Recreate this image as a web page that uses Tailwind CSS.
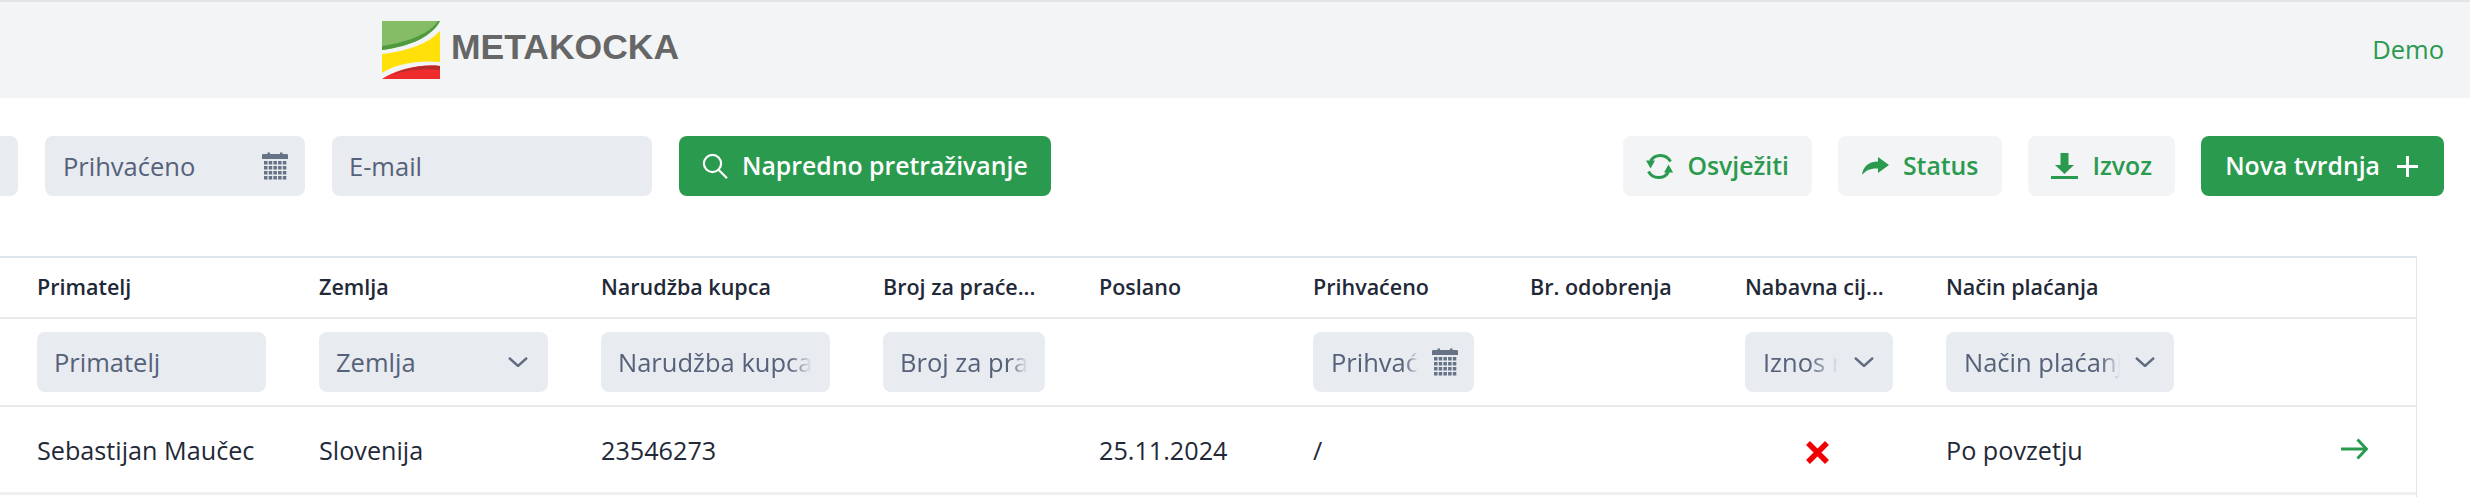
<!DOCTYPE html>
<html lang="en">
<head>
    <meta charset="UTF-8">
    <meta name="viewport" content="width=device-width, initial-scale=1.0">
    <title>Metakocka</title>
    <script src="https://cdn.jsdelivr.net/npm/@tailwindcss/browser@4"></script>
</head>
<body class="bg-white font-['Open_Sans',sans-serif] text-[#1f2937] overflow-hidden">
    <!-- Top bar -->
    <header class="h-[98px] bg-[#f3f4f6] border-t-2 border-[#e2e4e8] flex items-center justify-between pr-[26px] pl-[382px]">
        <div class="flex items-end gap-[11px] pb-[1px]">
            <svg class="w-[58px] h-[58px]" viewBox="0 0 58 58">
                <path d="M0 0H58C50 15 30 25 0 29Z" fill="#85bc66"/>
                <path d="M58 0C50 15 30 25 0 29V25C28 21 48 12 56 0Z" fill="#4f9a3f"/>
                <path d="M58 10V41C35 39 14 43 0 52V33C26 30 46 23 58 10Z" fill="#ffe008"/>
                <path d="M58 45V58H0C14 49 35 43 58 45Z" fill="#ee2c2c"/>
                <path d="M58 45V49C40 47 24 49 10 54C22 48 38 43 58 45Z" fill="#b92a2a"/>
            </svg>
            <span class="font-['Liberation_Sans',sans-serif] font-bold text-[35.5px] leading-none text-[#666666] pb-[13px]">METAKOCKA</span>
        </div>
        <a class="text-[#2a9a4e] text-[25.500px] font-medium -mt-[2px]">Demo</a>
    </header>

    <!-- Toolbar -->
    <div class="flex justify-between pt-[38px] pr-[26px] h-[158px]">
        <div class="flex gap-[27px] h-[60px]">
            <div class="w-[18px] bg-[#e8ebf0] rounded-r-lg"></div>
            <div class="w-[260px] bg-[#e8ebf0] rounded-lg flex items-center justify-between pl-[18px] pr-[17px] text-[25.500px] text-[#56617a]">
                <span>Prihvaćeno</span>
                <svg class="w-[26px] h-[28px]"><use href="#cal"/></svg>
            </div>
            <div class="w-[320px] bg-[#e8ebf0] rounded-lg flex items-center pl-[17px] text-[25.500px] text-[#56617a]">E-mail</div>
            <button class="bg-[#2a9a4e] text-white rounded-lg flex items-center gap-[14px] px-[23px] text-[24.800px] font-semibold">
                <svg class="w-[26px] h-[26px]" viewBox="0 0 26 26" fill="none" stroke="white" stroke-width="2.2"><circle cx="10.5" cy="10.5" r="8.6"/><path d="M16.8 17 25 25.2"/></svg>
                Napredno pretraživanje
            </button>
        </div>
        <div class="flex gap-[26px] h-[60px]">
            <button class="bg-[#f3f4f6] text-[#2a9a4e] rounded-lg flex items-center gap-[14px] px-[23px] text-[24.800px] font-semibold">
                <svg class="w-[27px] h-[27px]" viewBox="0 0 27 27" fill="none" stroke="#2a9a4e" stroke-width="3">
                    <path d="M24.500 8.500A11.500 11.500 0 0 0 4.500 8"/>
                    <path d="M2.500 18.500A11.500 11.500 0 0 0 22.500 19"/>
                    <path d="M0 7.500H9L4.500 15.500Z" fill="#2a9a4e" stroke="none"/>
                    <path d="M18 19.500H27L22.500 11.500Z" fill="#2a9a4e" stroke="none"/>
                </svg>
                Osvježiti
            </button>
            <button class="bg-[#f3f4f6] text-[#2a9a4e] rounded-lg flex items-center gap-[14px] px-[24px] text-[24.800px] font-semibold">
                <svg class="w-[27px] h-[18px]" viewBox="0 0 27 18"><path d="M16 0 27 8 16 16V11.500C9 11 4 13 0 18C1 10 6 4.500 16 4.500Z" fill="#2a9a4e"/></svg>
                Status
            </button>
            <button class="bg-[#f3f4f6] text-[#2a9a4e] rounded-lg flex items-center gap-[14px] px-[23px] text-[24.800px] font-semibold">
                <svg class="w-[27px] h-[26px]" viewBox="0 0 27 26" fill="#2a9a4e"><path d="M9.500 0H17.500V12H23L13.500 21 4 12H9.500Z"/><rect y="23" width="27" height="3"/></svg>
                Izvoz
            </button>
            <button class="bg-[#2a9a4e] text-white rounded-lg flex items-center gap-[17px] pl-[24px] pr-[26px] text-[24.800px] font-semibold">
                Nova tvrdnja
                <svg class="w-[21px] h-[21px]" viewBox="0 0 21 21" fill="white"><rect x="9" width="3" height="21"/><rect y="9" width="21" height="3"/></svg>
            </button>
        </div>
    </div>

    <!-- Hidden icon definitions -->
    <svg class="hidden">
        <symbol id="cal" viewBox="0 0 26 28">
            <path d="M0 3.500C0 2.500 .5 2 1.500 2H5.500V.5H8V2H18V.5H20.500V2H24.500C25.500 2 26 2.500 26 3.500V7H0Z" fill="#667285"/>
            <g fill="#667285">
                <rect x="2" y="9" width="3.500" height="3.500"/><rect x="6.700" y="9" width="3.500" height="3.500"/><rect x="11.400" y="9" width="3.500" height="3.500"/><rect x="16.100" y="9" width="3.500" height="3.500"/><rect x="20.800" y="9" width="3.500" height="3.500"/>
                <rect x="2" y="14" width="3.500" height="3.500"/><rect x="6.700" y="14" width="3.500" height="3.500"/><rect x="11.400" y="14" width="3.500" height="3.500"/><rect x="16.100" y="14" width="3.500" height="3.500"/><rect x="20.800" y="14" width="3.500" height="3.500"/>
                <rect x="2" y="19" width="3.500" height="3.500"/><rect x="6.700" y="19" width="3.500" height="3.500"/><rect x="11.400" y="19" width="3.500" height="3.500"/><rect x="16.100" y="19" width="3.500" height="3.500"/><rect x="20.800" y="19" width="3.500" height="3.500"/>
                <rect x="2" y="24" width="3.500" height="3.500"/><rect x="6.700" y="24" width="3.500" height="3.500"/><rect x="11.400" y="24" width="3.500" height="3.500"/><rect x="16.100" y="24" width="3.500" height="3.500"/><rect x="20.800" y="24" width="3.500" height="3.500"/>
            </g>
        </symbol>
        <symbol id="chev" viewBox="0 0 20 10">
            <path d="M1 .8 10 9 19 .8" fill="none" stroke="#5f6c80" stroke-width="2.400"/>
        </symbol>
    </svg>

    <!-- Table -->
    <div class="w-[2417px] border-t-2 border-r border-[#dfe5ec] h-[241px]">
        <table class="table-fixed w-full border-collapse text-[25.200px]">
            <colgroup>
                <col class="w-[293px]"><col class="w-[282px]"><col class="w-[282px]"><col class="w-[216px]"><col class="w-[214px]"><col class="w-[217px]"><col class="w-[215px]"><col class="w-[201px]"><col class="w-[269px]"><col>
            </colgroup>
            <thead>
                <tr class="h-[60px] border-b-2 border-[#e8eaed] text-left text-[21.500px]">
                    <th class="font-semibold pl-[37px]">Primatelj</th>
                    <th class="font-semibold pl-[26px]">Zemlja</th>
                    <th class="font-semibold pl-[26px]">Narudžba kupca</th>
                    <th class="font-semibold pl-[26px] whitespace-nowrap">Broj za praće...</th>
                    <th class="font-semibold pl-[26px]">Poslano</th>
                    <th class="font-semibold pl-[26px]">Prihvaćeno</th>
                    <th class="font-semibold pl-[26px] whitespace-nowrap">Br. odobrenja</th>
                    <th class="font-semibold pl-[26px] whitespace-nowrap">Nabavna cij...</th>
                    <th class="font-semibold pl-[26px]">Način plaćanja</th>
                    <th></th>
                </tr>
                <tr class="h-[88px] border-b-2 border-[#e8eaed] text-[25.500px] text-[#56617a]">
                    <th class="font-normal text-left pl-[37px]">
                        <div class="w-[229px] h-[60px] bg-[#e8ebf0] rounded-lg flex items-center px-[17px]">Primatelj</div>
                    </th>
                    <th class="font-normal text-left pl-[26px]">
                        <div class="w-[229px] h-[60px] bg-[#e8ebf0] rounded-lg flex items-center justify-between pl-[17px] pr-[20px]">Zemlja
                            <svg class="w-[20px] h-[10px]"><use href="#chev"/></svg>
                        </div>
                    </th>
                    <th class="font-normal text-left pl-[26px]">
                        <div class="w-[229px] h-[60px] bg-[#e8ebf0] rounded-lg flex items-center px-[17px]">
                            <span class="overflow-hidden whitespace-nowrap [mask-image:linear-gradient(to_right,black_88%,transparent)]">Narudžba kupca</span>
                        </div>
                    </th>
                    <th class="font-normal text-left pl-[26px]">
                        <div class="w-[162px] h-[60px] bg-[#e8ebf0] rounded-lg flex items-center px-[17px]">
                            <span class="overflow-hidden whitespace-nowrap [mask-image:linear-gradient(to_right,black_85%,transparent)]">Broj za praćenje</span>
                        </div>
                    </th>
                    <th></th>
                    <th class="font-normal text-left pl-[26px]">
                        <div class="w-[161px] h-[60px] bg-[#e8ebf0] rounded-lg flex items-center gap-[14px] pl-[18px] pr-[16px]">
                            <span class="flex-1 min-w-0 overflow-hidden whitespace-nowrap [mask-image:linear-gradient(to_right,black_85%,transparent)]">Prihvaćeno</span>
                            <svg class="w-[26px] h-[28px] shrink-0"><use href="#cal"/></svg>
                        </div>
                    </th>
                    <th></th>
                    <th class="font-normal text-left pl-[26px]">
                        <div class="w-[148px] h-[60px] bg-[#e8ebf0] rounded-lg flex items-center gap-[15px] pl-[18px] pr-[19px]">
                            <span class="flex-1 min-w-0 overflow-hidden whitespace-nowrap [mask-image:linear-gradient(to_right,black_60%,transparent)]">Iznos nabave</span>
                            <svg class="w-[20px] h-[10px] shrink-0"><use href="#chev"/></svg>
                        </div>
                    </th>
                    <th class="font-normal text-left pl-[26px]">
                        <div class="w-[228px] h-[60px] bg-[#e8ebf0] rounded-lg flex items-center gap-[15px] pl-[18px] pr-[19px]">
                            <span class="flex-1 min-w-0 overflow-hidden whitespace-nowrap [mask-image:linear-gradient(to_right,black_88%,transparent)]">Način plaćanja</span>
                            <svg class="w-[20px] h-[10px] shrink-0"><use href="#chev"/></svg>
                        </div>
                    </th>
                    <th></th>
                </tr>
            </thead>
            <tbody>
                <tr class="h-[87px] border-b-[3px] border-[#eef0f2]">
                    <td class="pl-[37px] pt-[3px]">Sebastijan Maučec</td>
                    <td class="pl-[26px] pt-[3px]">Slovenija</td>
                    <td class="pl-[26px] pt-[3px]">23546273</td>
                    <td></td>
                    <td class="pl-[26px] pt-[3px]">25.11.2024</td>
                    <td class="pl-[26px] pt-[3px]">/</td>
                    <td></td>
                    <td class="pl-[26px] pt-[7px]">
                        <svg class="w-[23px] h-[23px] ml-[61px]" viewBox="0 0 23 23"><path d="M2 2 21 21M21 2 2 21" stroke="#f00000" stroke-width="5.500" fill="none"/></svg>
                    </td>
                    <td class="pl-[26px] pt-[3px]">Po povzetju</td>
                    <td class="pl-[152px]">
                        <svg class="w-[27px] h-[22px]" viewBox="0 0 27 22" fill="none" stroke="#2a9a4e" stroke-width="3"><path d="M0 11H25M16.500 1.500 25.500 11 16.500 20.500"/></svg>
                    </td>
                </tr>
            </tbody>
        </table>
    </div>
</body>
</html>
